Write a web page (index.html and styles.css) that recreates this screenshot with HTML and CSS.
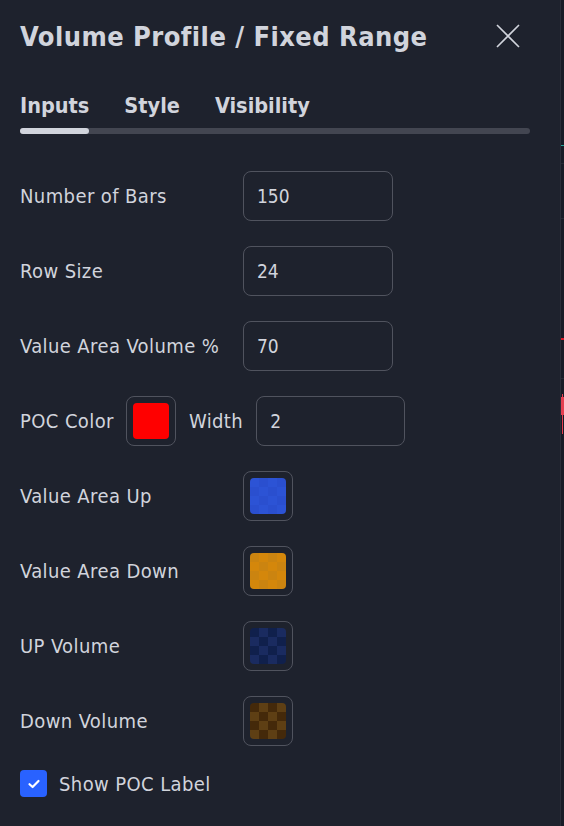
FILE: index.html
```html
<!DOCTYPE html>
<html lang="en">
<head>
    <meta charset="UTF-8">
    <meta name="viewport" content="width=device-width, initial-scale=1.0">
    <title>Volume Profile / Fixed Range</title>
    <link rel="stylesheet" href="styles.css">
</head>
<body>

    <div class="dialog">
        <div class="dialog-header">
            <h1 class="dialog-title">Volume Profile / Fixed Range</h1>
            <button class="close-btn" aria-label="Close">
                <svg width="24" height="24" viewBox="0 0 24 24">
                    <path d="M1 1 L23 23 M23 1 L1 23" stroke="#d1d4dc" stroke-width="1.6" fill="none"/>
                </svg>
            </button>
        </div>

        <!-- tabs -->
        <div class="tabs">
            <div class="tab-list">
                <span class="tab active">Inputs</span>
                <span class="tab">Style</span>
                <span class="tab">Visibility</span>
            </div>
            <div class="tab-track"><div class="tab-thumb"></div></div>
        </div>

        <div class="form">
            <div class="row">
                <span class="label">Number of Bars</span>
                <div class="input">150</div>
            </div>
            <div class="row">
                <span class="label">Row Size</span>
                <div class="input">24</div>
            </div>
            <div class="row">
                <span class="label">Value Area Volume %</span>
                <div class="input">70</div>
            </div>
            <div class="row row-inline">
                <span class="label">POC Color</span>
                <div class="swatch"><div class="swatch-fill red"></div></div>
                <span class="label">Width</span>
                <div class="input">2</div>
            </div>
            <div class="row">
                <span class="label">Value Area Up</span>
                <div class="swatch"><div class="swatch-fill blue"></div></div>
            </div>
            <div class="row">
                <span class="label">Value Area Down</span>
                <div class="swatch"><div class="swatch-fill orange"></div></div>
            </div>
            <div class="row">
                <span class="label">UP Volume</span>
                <div class="swatch"><div class="swatch-fill dark-blue"></div></div>
            </div>
            <div class="row">
                <span class="label">Down Volume</span>
                <div class="swatch"><div class="swatch-fill dark-brown"></div></div>
            </div>
        </div>

        <label class="checkbox-row">
            <span class="checkbox">
                <svg width="16" height="16" viewBox="0 0 16 16">
                    <path d="M3.5 8.2 L6.6 11 L12.5 5" stroke="#fff" stroke-width="2.2" fill="none" stroke-linecap="round" stroke-linejoin="round"/>
                </svg>
            </span>
            <span class="label">Show POC Label</span>
        </label>
    </div>

    <!-- chart edge behind the dialog -->
    <div class="chart-edge">
        <div class="mark teal" style="top: 145px;"></div>
        <div class="grid-line" style="top: 163px;"></div>
        <div class="grid-line" style="top: 218px;"></div>
        <div class="mark red-line" style="top: 338px;"></div>
        <div class="grid-line" style="top: 378px;"></div>
        <div class="wick" style="top: 394px;"></div>
        <div class="candle" style="top: 397px;"></div>
    </div>

</body>
</html>
```

FILE: styles.css
```css
:root {
    --bg: #1e222d;
    --text: #d1d4dc;
    --border: #50535e;
    --track: #434651;
    --accent: #2962ff;
}

* {
    box-sizing: border-box;
}

body {
    margin: 0;
    height: 826px;
    display: flex;
    background: var(--bg);
    color: var(--text);
    font-family: 'DejaVu Sans Condensed', 'DejaVu Sans', sans-serif;
    font-stretch: condensed;
    overflow: hidden;
}

.dialog {
    width: 560px;
    padding: 0 30px 0 20px;
}

/* header */
.dialog-header {
    height: 72px;
    display: flex;
    align-items: center;
    justify-content: space-between;
}

.dialog-title {
    margin: 0;
    font-size: 27px;
    font-weight: bold;
    letter-spacing: 0.45px;
}

.close-btn {
    background: none;
    border: 0;
    padding: 0;
    margin-right: 10px;
    width: 24px;
    height: 24px;
    cursor: pointer;
}

/* tabs */
.tabs {
    margin-top: 13px;
}

.tab-list {
    display: flex;
    gap: 35px;
    height: 40px;
    align-items: center;
}

.tab {
    font-size: 21.5px;
    font-weight: bold;
}

.tab-track {
    margin-top: 3px;
    height: 6px;
    border-radius: 3px;
    background: var(--track);
}

.tab-thumb {
    width: 69px;
    height: 100%;
    border-radius: 3px;
    background: var(--text);
}

/* form rows */
.form {
    margin-top: 37px;
    display: flex;
    flex-direction: column;
    gap: 25px;
}

.row {
    display: flex;
    align-items: center;
    height: 50px;
}

.row > .label:first-child {
    width: 223px;
}

.row-inline > .label:first-child {
    width: auto;
    margin-right: 12px;
}

.row-inline > .label:nth-child(3) {
    margin: 0 13px;
}

.label {
    font-size: 20px;
    letter-spacing: 0.4px;
}

.input {
    width: 150px;
    height: 50px;
    border: 1px solid var(--border);
    border-radius: 8px;
    padding: 0 13px;
    display: flex;
    align-items: center;
    font-size: 19px;
}

.row-inline .input {
    width: 149px;
}

.swatch {
    width: 50px;
    height: 50px;
    border: 1px solid var(--border);
    border-radius: 8px;
    padding: 6px;
}

.swatch-fill {
    width: 100%;
    height: 100%;
    border-radius: 4px;
}

.red {
    background: #ff0000;
}

.blue {
    background: repeating-conic-gradient(#2a4fcf 0 25%, #2c53d5 0 50%) 0 0 / 18px 18px;
}

.orange {
    background: repeating-conic-gradient(#d4870b 0 25%, #cb8410 0 50%) 0 0 / 18px 18px;
}

.dark-blue {
    background: repeating-conic-gradient(#1a2b60 0 25%, #10204c 0 50%) 0 0 / 18px 18px;
}

.dark-brown {
    background: repeating-conic-gradient(#5e3f14 0 25%, #44290a 0 50%) 0 0 / 18px 18px;
}

/* checkbox */
.checkbox-row {
    margin-top: 24px;
    display: flex;
    align-items: center;
    gap: 12px;
}

.checkbox {
    width: 27px;
    height: 27px;
    border-radius: 4px;
    background: var(--accent);
    display: flex;
    align-items: center;
    justify-content: center;
}

/* chart strip on the right */
.chart-edge {
    flex: 1;
    position: relative;
    background: #181c27;
    border-left: 1px solid #2a2e39;
}

.grid-line {
    position: absolute;
    left: 0;
    right: 0;
    height: 1px;
    background: #262a35;
}

.mark {
    position: absolute;
    left: 0;
    right: 0;
    height: 2px;
}

.teal {
    background: #26a69a;
    height: 1px;
}

.red-line {
    background: #d81b2a;
}

.wick {
    position: absolute;
    left: 1px;
    width: 1px;
    height: 40px;
    background: #e53f50;
}

.candle {
    position: absolute;
    left: 0;
    width: 3px;
    height: 18px;
    background: #e53f50;
}
```
